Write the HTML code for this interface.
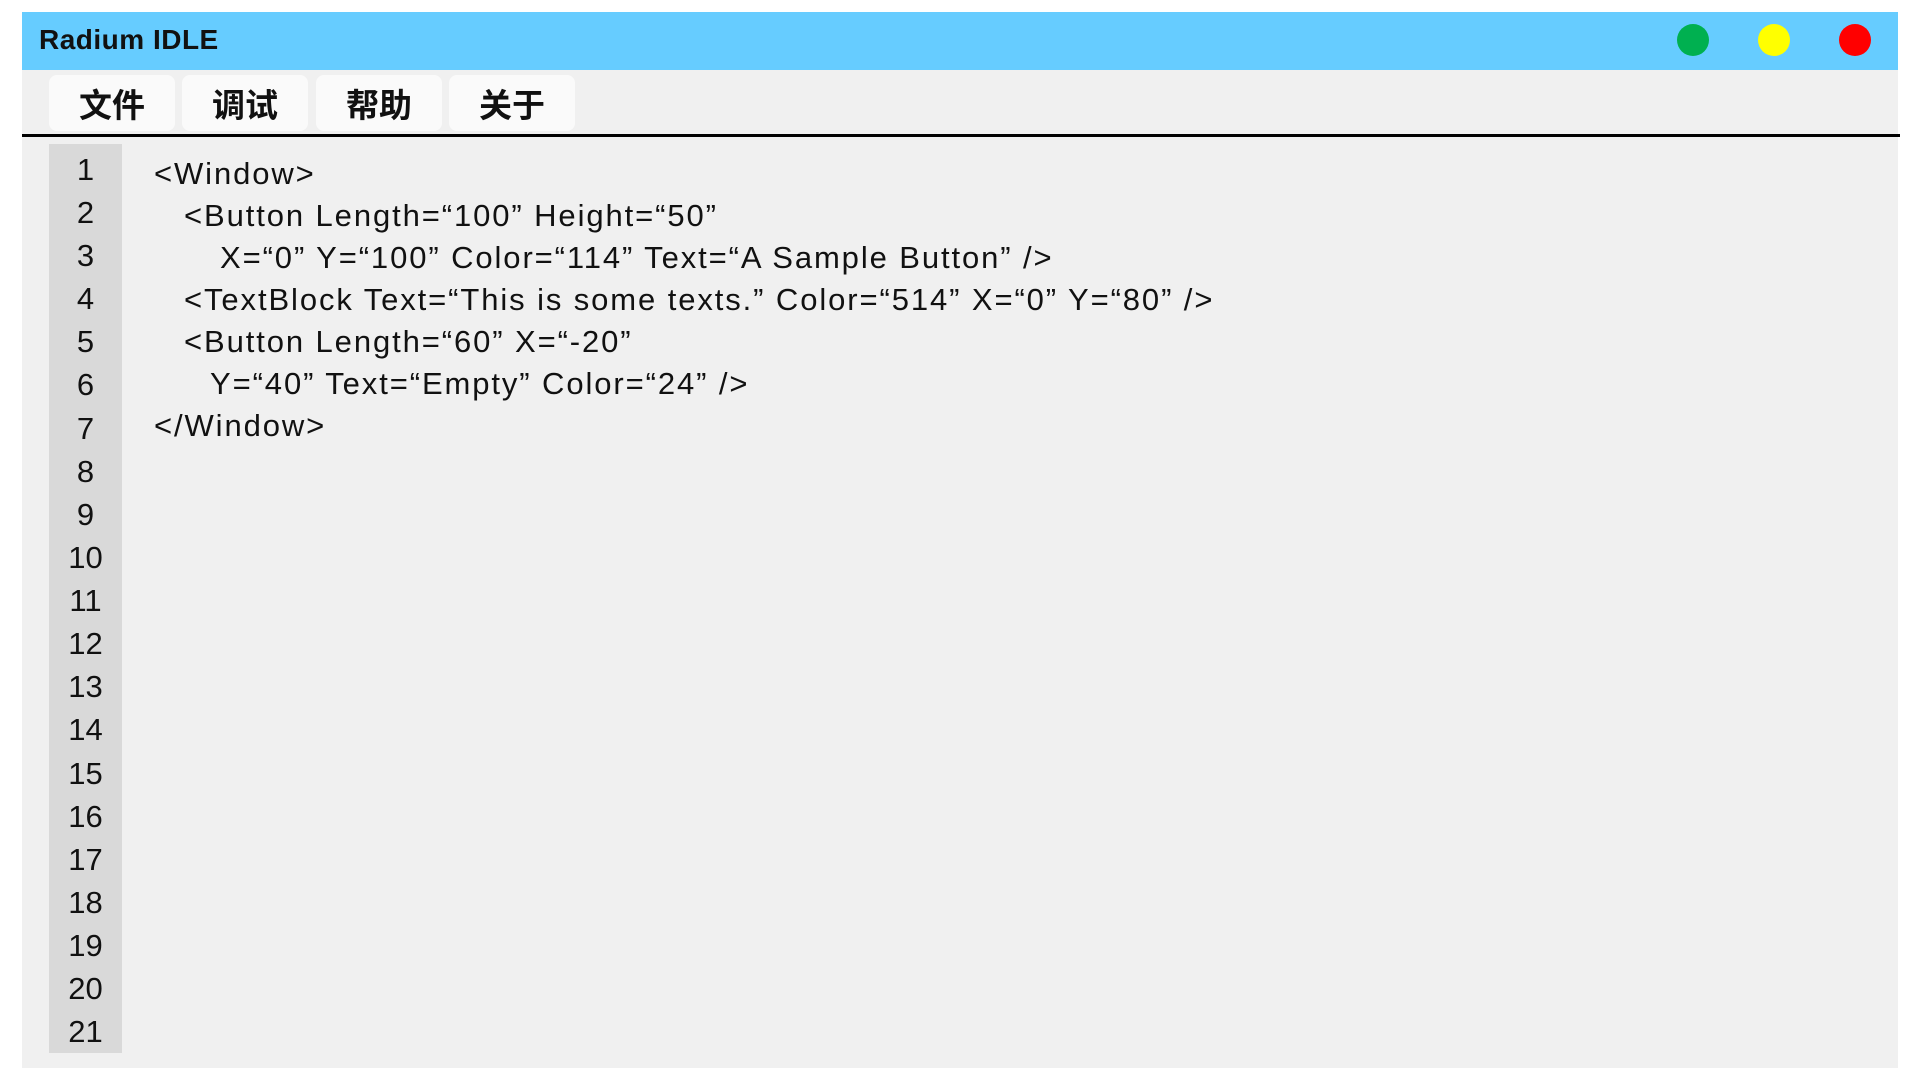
<!DOCTYPE html>
<html><head><meta charset="utf-8"><style>
html,body{margin:0;padding:0;width:1920px;height:1080px;background:#fff;overflow:hidden;font-family:"Liberation Sans","Noto Sans CJK SC",sans-serif;}
.win{position:absolute;left:22px;top:12px;width:1876px;height:1056px;background:#f0f0f0;}
.title{position:absolute;left:0;top:0;width:1876px;height:58px;background:#66ccff;}
.title span{position:absolute;left:17px;top:12px;font-size:28px;font-weight:bold;color:#111;letter-spacing:0.5px;}
.dot{position:absolute;width:32px;height:32px;border-radius:50%;top:12px;}
.btn{position:absolute;top:63px;height:56px;width:126px;background:#fafafa;border-radius:8px;font-size:33px;font-weight:bold;text-align:center;line-height:56px;color:#111;font-family:"Noto Sans CJK SC",sans-serif;}
.rule{position:absolute;left:0;top:122px;width:1878px;height:3px;background:#000;}
.gut{position:absolute;left:27px;top:132px;width:73px;height:909px;background:#d9d9d9;}
.ln{position:absolute;left:27px;width:73px;text-align:center;font-size:31px;color:#111;line-height:40px;}
.code{position:absolute;font-size:31px;letter-spacing:1.9px;color:#111;line-height:40px;white-space:pre;}
</style></head><body>
<div class="win">
<div class="title"><span>Radium IDLE</span>
<div class="dot" style="left:1655px;background:#00b050"></div>
<div class="dot" style="left:1736px;background:#ffff00"></div>
<div class="dot" style="left:1817px;background:#ff0000"></div>
</div>
<div class="btn" style="left:27px">文件</div>
<div class="btn" style="left:160px">调试</div>
<div class="btn" style="left:294px">帮助</div>
<div class="btn" style="left:427px">关于</div>
<div class="rule"></div>
<div class="gut"></div>
<div class="ln" style="top:138px">1</div>
<div class="ln" style="top:181px">2</div>
<div class="ln" style="top:224px">3</div>
<div class="ln" style="top:267px">4</div>
<div class="ln" style="top:310px">5</div>
<div class="ln" style="top:353px">6</div>
<div class="ln" style="top:397px">7</div>
<div class="ln" style="top:440px">8</div>
<div class="ln" style="top:483px">9</div>
<div class="ln" style="top:526px">10</div>
<div class="ln" style="top:569px">11</div>
<div class="ln" style="top:612px">12</div>
<div class="ln" style="top:655px">13</div>
<div class="ln" style="top:698px">14</div>
<div class="ln" style="top:742px">15</div>
<div class="ln" style="top:785px">16</div>
<div class="ln" style="top:828px">17</div>
<div class="ln" style="top:871px">18</div>
<div class="ln" style="top:914px">19</div>
<div class="ln" style="top:957px">20</div>
<div class="ln" style="top:1000px">21</div>
<div class="code" style="left:132px;top:142px">&lt;Window&gt;</div>
<div class="code" style="left:162px;top:184px">&lt;Button Length=“100” Height=“50”</div>
<div class="code" style="left:198px;top:226px">X=“0” Y=“100” Color=“114” Text=“A Sample Button” /&gt;</div>
<div class="code" style="left:162px;top:268px">&lt;TextBlock Text=“This is some texts.” Color=“514” X=“0” Y=“80” /&gt;</div>
<div class="code" style="left:162px;top:310px">&lt;Button Length=“60” X=“-20”</div>
<div class="code" style="left:188px;top:352px">Y=“40” Text=“Empty” Color=“24” /&gt;</div>
<div class="code" style="left:132px;top:394px">&lt;/Window&gt;</div>
</div>
</body></html>
